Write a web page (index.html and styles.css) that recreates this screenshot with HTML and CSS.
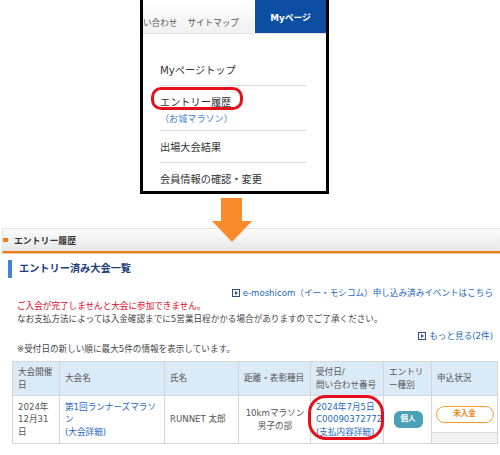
FILE: index.html
```html
<!DOCTYPE html>
<html lang="ja">
<head>
<meta charset="utf-8">
<title>エントリー履歴</title>
<link rel="stylesheet" href="styles.css">
</head>
<body>
<div class="page">
  <div class="panel">
    <div class="nav">
      <div class="nav-links"><span>い合わせ</span><span>サイトマップ</span></div>
      <div class="nav-my">Myページ</div>
    </div>
    <ul class="menu">
      <li class="menu-item">Myページトップ</li>
      <li class="menu-item has-sub"><span class="ring"></span>エントリー履歴<div class="sub">（お城マラソン）</div></li>
      <li class="menu-item">出場大会結果</li>
      <li class="menu-item last">会員情報の確認・変更</li>
    </ul>
  </div>

  <section class="entry">
    <div class="bar"><span class="bar-mark"></span>エントリー履歴</div>
    <h2 class="title">エントリー済み大会一覧</h2>
    <div class="content">
      <p class="line right"><a class="link" href="#"><svg class="ico" viewBox="0 0 8 8"><rect x="0.5" y="0.5" width="7" height="7" fill="#f3f5fa" stroke="#2f4f86"/><path d="M3 2 L6 4 L3 6 Z" fill="#2f4f86"/></svg>e-moshicom<span class="cjk">（イー・モシコム）</span>申し込み済みイベントはこちら</a></p>
      <p class="line red">ご入会が完了しませんと大会に参加できません。</p>
      <p class="line">なお支払方法によっては入金確認までに5営業日程かかる場合がありますのでご了承ください。</p>
      <p class="line right more"><a class="link" href="#"><svg class="ico" viewBox="0 0 8 8"><rect x="0.5" y="0.5" width="7" height="7" fill="#f3f5fa" stroke="#2f4f86"/><path d="M3 2 L6 4 L3 6 Z" fill="#2f4f86"/></svg>もっと見る(2件)</a></p>
      <p class="line">※受付日の新しい順に最大5件の情報を表示しています。</p>
    </div>

    <table class="list">
      <colgroup>
        <col class="c1"><col class="c2"><col class="c3"><col class="c4"><col class="c5"><col class="c6"><col class="c7">
      </colgroup>
      <thead>
        <tr>
          <th>大会開催日</th>
          <th>大会名</th>
          <th>氏名</th>
          <th>距離・表彰種目</th>
          <th>受付日/<br>問い合わせ番号</th>
          <th>エントリ<br>ー種別</th>
          <th>申込状況</th>
        </tr>
      </thead>
      <tbody>
        <tr>
          <td>2024年12月31日</td>
          <td><a class="link" href="#">第1回ランナーズマラソン</a><br><a class="link" href="#">(大会詳細)</a></td>
          <td>RUNNET 太郎</td>
          <td class="center">10kmマラソン<br>男子の部</td>
          <td class="c5-cell"><span class="ring ring-table"></span><div class="c5-text"><a class="link" href="#">2024年7月5日</a><br><a class="link" href="#">C00090372772</a><br><a class="link" href="#">(支払内容詳細)</a></div></td>
          <td class="center"><span class="badge">個人</span></td>
          <td class="status-cell"><div class="status"><span class="pill">未入金</span></div><div class="status-foot"></div></td>
        </tr>
      </tbody>
    </table>
  </section>

  <svg class="arrow" viewBox="0 0 40 44"><polygon points="9,0 30,0 30,23 40,23 20,44 0,23 9,23" fill="#fb8a2c"/></svg>
</div>
</body>
</html>
```

FILE: styles.css
```css
* { box-sizing: border-box; }

body {
  margin: 0;
  background: #fff;
  font-family: "DejaVu Sans", "Noto Sans CJK JP", sans-serif;
  font-size: 8.6px;
  color: #444;
}

.cjk { font-family: "Noto Sans CJK JP", sans-serif; }

.page {
  position: relative;
  width: 500px;
  height: 455px;
  overflow: hidden;
}

/* ---- top panel ---- */
.panel {
  margin-left: 140px;
  width: 189px;
  border: 3px solid #000;
  border-top: 0;
}

.nav {
  display: flex;
  height: 34px;
  border-bottom: 1px solid #e3e5ea;
}

.nav-links {
  flex: 1;
  display: flex;
  align-items: center;
  gap: 10px;
  padding-top: 10px;
  background: linear-gradient(#ffffff, #f0f0f0);
  color: #555;
  white-space: nowrap;
  overflow: hidden;
}

.nav-my {
  width: 71px;
  display: flex;
  align-items: center;
  justify-content: center;
  padding-top: 1px;
  background: #0b4ea2;
  color: #fff;
  font-weight: bold;
  font-size: 8.8px;
}

.menu {
  list-style: none;
  margin: 0;
  padding: 20px 20px 0 17px;
  font-size: 10.2px;
  color: #333;
}

.menu-item {
  position: relative;
  padding: 10px 0 7px;
  line-height: 14px;
  border-bottom: 1px solid #dcdcdc;
}

.menu-item.has-sub { padding-bottom: 5px; }
.menu-item.last { border-bottom: 0; padding-bottom: 4px; }

.sub {
  margin-top: 2px;
  line-height: 13px;
  font-family: "Noto Sans CJK JP", sans-serif;
  font-size: 9.1px;
  color: #3a84cf;
}

.ring {
  position: absolute;
  left: -9px;
  top: 1px;
  width: 92px;
  height: 23px;
  border: 3px solid #e5101c;
  border-radius: 10px;
}

/* ---- entry section ---- */
.entry {
  margin: 34px 0 0 2px;
}

.bar {
  display: flex;
  align-items: center;
  height: 25px;
  border-top: 1px solid #e1e1e1;
  border-left: 1px solid #e6e6e6;
  border-bottom: 2px solid #ee7b20;
  box-shadow: 0 1px 0 #f9cba3;
  background: linear-gradient(#fcfcfc, #e7e7e7);
  color: #333;
  font-weight: bold;
  font-size: 8.9px;
}

.bar-mark {
  width: 5px;
  height: 4px;
  margin-right: 6px;
  background: #f0801e;
}

.title {
  margin: 7px 0 0 6px;
  padding-left: 7px;
  border-left: 4px solid #3f86d6;
  line-height: 18px;
  font-size: 10.2px;
  font-weight: bold;
  color: #1d3d7c;
}

.content {
  padding: 8px 7px 0 15px;
  line-height: 13px;
}

.line { margin: 0; }
.right { text-align: right; }
.more { margin-top: 4px; }
.red { color: #e2001a; }

.link {
  color: #2468c0;
  text-decoration: none;
}

.ico {
  display: inline-block;
  width: 8px;
  height: 8px;
  margin-right: 3px;
  vertical-align: -1px;
}

/* ---- table ---- */
.list {
  margin: 5px 0 0 10px;
  width: 485px;
  border-collapse: collapse;
  table-layout: fixed;
  line-height: 12.5px;
}

.c1 { width: 47px; }
.c2 { width: 105px; }
.c3 { width: 74px; }
.c4 { width: 72px; }
.c5 { width: 73px; }
.c6 { width: 48px; }
.c7 { width: 66px; }

.list th,
.list td {
  border: 1px solid #d6d6d6;
  padding: 0 4px 0 5px;
  vertical-align: middle;
  text-align: left;
  color: #555;
}

.list th {
  height: 34px;
  background: #dbeaf7;
  font-weight: normal;
}

.list td { height: 48px; }

.list td.center { text-align: center; }

.c5-cell { position: relative; }
.list td.c5-cell { padding-right: 1px; }

.c5-text {
  overflow: hidden;
  white-space: nowrap;
}

.ring-table {
  left: -3px;
  top: -1px;
  width: 76px;
  height: 45px;
  border-width: 3.5px;
  border-radius: 18px;
}

.badge {
  display: inline-flex;
  align-items: center;
  justify-content: center;
  width: 29px;
  height: 17px;
  border-radius: 6px;
  background: #4aa0b6;
  color: #fff;
  font-weight: bold;
  font-size: 7.5px;
}

.list td.status-cell { padding: 0; }

.status {
  height: 36px;
  display: flex;
  align-items: center;
  justify-content: center;
}

.pill {
  display: flex;
  align-items: center;
  justify-content: center;
  width: 58px;
  height: 17px;
  border: 1.5px solid #f29a2e;
  border-radius: 9px;
  color: #e98a1a;
  font-weight: bold;
  font-size: 7.5px;
}

.status-foot {
  height: 11px;
  border-top: 1px solid #dddddd;
  background: #f2f2f2;
}

/* annotation arrow over the section bar */
.arrow {
  position: absolute;
  left: 212px;
  top: 198px;
  width: 40px;
  height: 44px;
}
```
